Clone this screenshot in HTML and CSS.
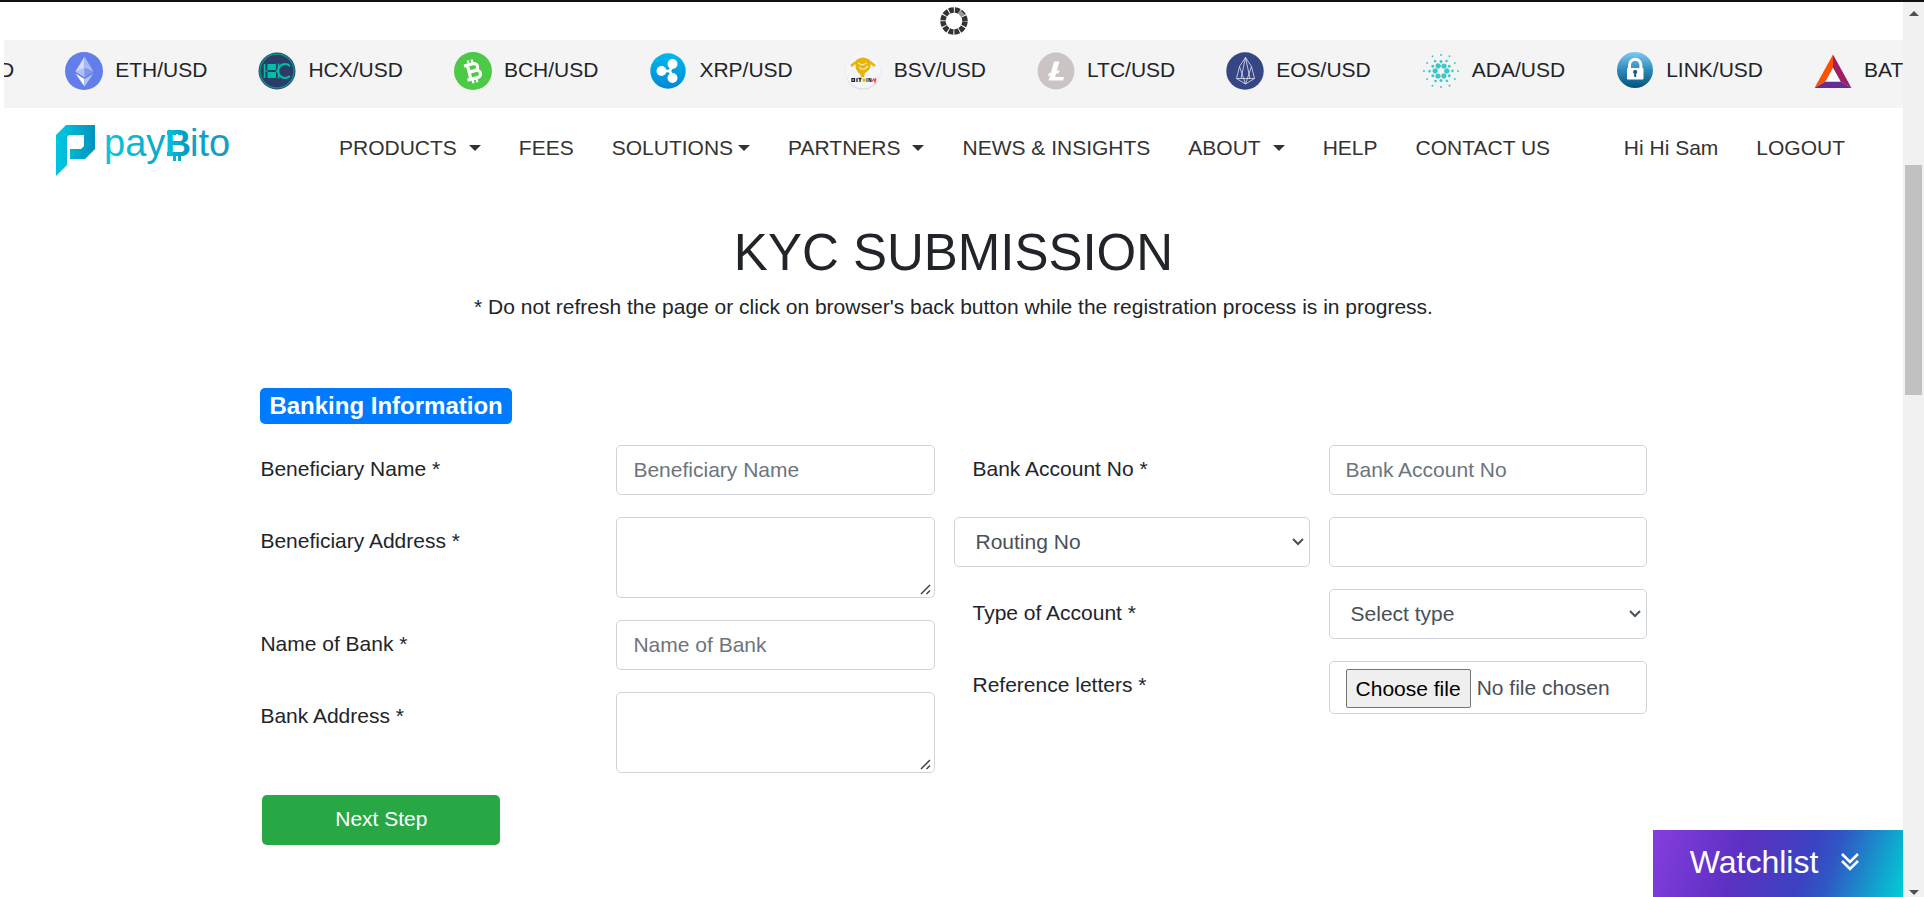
FILE: index.html
```html
<!DOCTYPE html>
<html lang="en">
<head>
<meta charset="utf-8">
<title>KYC Submission - PayBito</title>
<link rel="stylesheet" href="styles.css">
</head>
<body>
<div class="page">
  <div class="loader">
    <svg class="loader-icon" viewBox="0 0 28 28" aria-label="Loading">
      <circle cx="14" cy="14" r="11" fill="none" stroke="#333" stroke-width="5.500" stroke-dasharray="4.76 1" stroke-dashoffset="-0.5"/>
      <path d="M18.700 6.600 L20.200 3.800 A11.500 11.500 0 0 1 24 7.600 L21.400 9.300Z" fill="#999" stroke="#999"/>
    </svg>
  </div>

  <div class="ticker">
    <div class="ticker-track">
      <div class="coin">BTC/USD</div>
      <div class="coin">
        <svg class="coin-icon" viewBox="0 0 38 38"><circle cx="19" cy="19" r="19" fill="#627eea"/><path d="M19.5 4.500L10.500 19.500 19.500 25z" fill="#d5dcfa"/><path d="M19.500 4.500L28.500 19.500 19.500 25z" fill="#aab9f4"/><path d="M10.500 19.500L19.500 15.500V25z" fill="#b3c0f5"/><path d="M28.500 19.500L19.500 15.500V25z" fill="#7f96ee"/><path d="M10.500 21.500L19.500 27V34.500z" fill="#fff"/><path d="M28.500 21.500L19.500 27V34.500z" fill="#b5c2f6"/></svg>
        ETH/USD</div>
      <div class="coin">
        <svg class="coin-icon" viewBox="0 0 38 38"><circle cx="19" cy="19" r="18.500" fill="#2b3d67"/><circle cx="19" cy="19" r="17" fill="none" stroke="#0d8f85" stroke-width="1.500"/><path d="M6.500 12v14" stroke="#00bfa5" stroke-width="1.500"/><path d="M6 19h4" stroke="#00bfa5"/><path d="M9.500 12H18v6H9.500zM9.500 20H18v6H9.500z" fill="#00bfa5"/><path d="M20.500 11.500v15M18 19h3" stroke="#00bfa5" stroke-width="1.400"/><path d="M32 14a7 7 0 1 0 0 10" fill="none" stroke="#00bfa5" stroke-width="2"/></svg>
        HCX/USD</div>
      <div class="coin">
        <svg class="coin-icon" viewBox="0 0 38 38"><circle cx="19" cy="19" r="19" fill="#4cca47"/><g transform="rotate(-14 19 19)" fill="none" stroke="#fff"><path d="M11.500 12H21a3.500 3.500 0 0 1 0 7h-6M11.500 26.500H22a3.700 3.700 0 0 0 0-7.400h-6M15 12v14" stroke-width="3.200"/><path d="M16.500 7.500v5M20.500 7.500v5M16.500 26v5M20.500 26v5" stroke-width="2.200"/></g></svg>
        BCH/USD</div>
      <div class="coin">
        <svg class="coin-icon" viewBox="0 0 38 38"><defs><linearGradient id="xrp" x2="0" y2="1"><stop stop-color="#00b9ee"/><stop offset="1" stop-color="#0089d6"/></linearGradient></defs><circle cx="19" cy="19" r="17.700" fill="url(#xrp)"/><g fill="#fff"><circle cx="12.500" cy="19" r="5"/><circle cx="23.500" cy="12" r="5"/><circle cx="23.500" cy="26" r="5"/></g><path d="M12 19h7q3 0 3.500-4M19 19q3 0 3.500 4" fill="none" stroke="#fff" stroke-width="2.600"/></svg>
        XRP/USD</div>
      <div class="coin">
        <svg class="coin-icon" viewBox="0 0 38 38"><circle cx="19" cy="20" r="17.500" fill="#d3d5da"/><circle cx="19" cy="19" r="17.500" fill="#f4f6fc"/><path d="M12 8q7-5 14 0q3 9-5 13l-1 4q-3 1-4-3q-6-4-4-14z" fill="#eab308"/><path d="M14 11l4 2 5-2M15 15q4 5 9-1M17 17h4" fill="none" stroke="#f8eec5" stroke-width="1.200"/><path d="M12 10L7 14M26 10l5 4" stroke="#eab308" stroke-width="2.500"/><path d="M8 26v4M8 26.700h2.500v2.600H8M13 26v4M14.500 26.500h3M16 26v4" fill="none" stroke="#222" stroke-width="1.300"/><circle cx="20" cy="28" r="1.800" fill="#eab308"/><path d="M23 26v4M25 30v-4l2 4v-4" fill="none" stroke="#222"/><path d="M28 29.500l2-3M30 27l1 3 1-4" fill="none" stroke="#e0455a" stroke-width="1.200"/></svg>
        BSV/USD</div>
      <div class="coin">
        <svg class="coin-icon" viewBox="0 0 38 38"><circle cx="19" cy="19" r="18.500" fill="#cac5c4"/><path d="M17 9.500h5.500L19.800 19l2.700-1-.7 2.800-2.800 1.100-.9 3.100H27L26 28.500H11.500l1.700-5.100-2.200.8.700-2.800 2.300-.9z" fill="#fff"/></svg>
        LTC/USD</div>
      <div class="coin">
        <svg class="coin-icon" viewBox="0 0 38 38"><circle cx="19" cy="19" r="18.700" fill="#364583"/><path d="M19.500 5.500l-6 9-3 12 9 5.500 9-5.500-3-12zM13.500 14.500l6 17.500 6-17.500M19.500 5.500l-4.500 21M19.500 5.500l4.500 21M10.500 26.500h18" fill="none" stroke="#dfe4f5" stroke-width=".8"/></svg>
        EOS/USD</div>
      <div class="coin">
        <svg class="coin-icon" viewBox="-19 -19 38 38"><defs><g id="ada"><circle cy="-9.500" r="1.500"/><circle cx="3" cy="-5" r="2.600"/><circle cx="5.500" cy="-10" r="1.300"/><circle cy="-16" r="1"/><circle cx="8.500" cy="-14.700" r="1"/></g></defs><g fill="#3cc8c8"><use href="#ada"/><use href="#ada" transform="rotate(60)"/><use href="#ada" transform="rotate(120)"/><use href="#ada" transform="rotate(180)"/><use href="#ada" transform="rotate(240)"/><use href="#ada" transform="rotate(300)"/></g></svg>
        ADA/USD</div>
      <div class="coin">
        <svg class="coin-icon" viewBox="0 0 38 38"><defs><linearGradient id="lnk" x2="0" y2="1"><stop stop-color="#7ccaf2"/><stop offset=".5" stop-color="#2e89b8"/><stop offset="1" stop-color="#04527c"/></linearGradient></defs><circle cx="19" cy="18" r="18" fill="url(#lnk)"/><path d="M13.500 17v-4a5.700 5.700 0 0 1 11.400 0v4" fill="none" stroke="#fff" stroke-width="3"/><rect x="11" y="16" width="16.500" height="11.500" rx="1" fill="#fff"/><path d="M19.200 18a2 2 0 0 1 1 3.800V25h-2v-3.200a2 2 0 0 1 1-3.800z" fill="#12628f"/></svg>
        LINK/USD</div>
      <div class="coin">
        <svg class="coin-icon" viewBox="0 0 38 38"><path d="M19 2.500L.5 36 11.500 29.500 19 16z" fill="#ff5000"/><path d="M19 2.500L37.500 36 26.500 29.500 19 16z" fill="#9e1f63"/><path d="M.5 36h37l-11-6.500h-15z" fill="#662d91"/><path d="M19 16l-7.500 13.500h15z" fill="#fff"/></svg>
        BAT/USD</div>
    </div>
  </div>

  <header class="header">
    <a class="logo" href="#" aria-label="paybito">
      <svg class="logo-art" viewBox="0 0 176 54">
        <defs>
          <linearGradient id="mark" x2="1" y2="0"><stop offset=".15" stop-color="#00c3de"/><stop offset="1" stop-color="#0292bd"/></linearGradient>
          <linearGradient id="word" gradientUnits="userSpaceOnUse" x1="50" y1="0" x2="175" y2="0"><stop stop-color="#0cc4de"/><stop offset=".5" stop-color="#0ba5c9"/><stop offset="1" stop-color="#149bc4"/></linearGradient>
          <linearGradient id="coinb" gradientUnits="userSpaceOnUse" x1="112" y1="0" x2="136" y2="0"><stop stop-color="#00c3de"/><stop offset="1" stop-color="#0292bd"/></linearGradient>
        </defs>
        <path d="M1 11L11 1h29v24L30 35H15V25h11l3-3V11H14l-2 2v28L1 52z" fill="url(#mark)"/>
        <g class="logo-word" fill="url(#word)"><text x="49" y="32">pay</text><text x="135" y="32">ito</text></g>
        <g fill="url(#coinb)"><text class="logo-b" x="110" y="32">B</text><path d="M118 6h3v5h-3zM123 6h3v5h-3zM118 31h3v6h-3zM123 31h3v6h-3zM112 7h5v4h-5zM112 28h5v4h-5z"/></g>
      </svg>
    </a>
    <nav class="nav">
      <a href="#" class="spaced">PRODUCTS <span class="caret"></span></a>
      <a href="#">FEES</a>
      <a href="#" class="tight">SOLUTIONS<span class="caret"></span></a>
      <a href="#" class="spaced">PARTNERS <span class="caret"></span></a>
      <a href="#">NEWS &amp; INSIGHTS</a>
      <a href="#" class="spaced">ABOUT <span class="caret"></span></a>
      <a href="#">HELP</a>
      <a href="#">CONTACT US</a>
    </nav>
    <nav class="nav account">
      <a href="#">Hi Hi Sam</a>
      <a href="#">LOGOUT</a>
    </nav>
  </header>

  <main class="main">
    <h1 class="title">KYC SUBMISSION</h1>
    <p class="note">* Do not refresh the page or click on browser's back button while the registration process is in progress.</p>

    <form class="form">
      <h2 class="badge">Banking Information</h2>
      <div class="columns">
        <div class="stack">
          <div class="row"><label for="bname">Beneficiary Name *</label><input class="control" id="bname" type="text" placeholder="Beneficiary Name"></div>
          <div class="row"><label for="baddr">Beneficiary Address *</label><textarea class="control" id="baddr"></textarea></div>
          <div class="row"><label for="bank">Name of Bank *</label><input class="control" id="bank" type="text" placeholder="Name of Bank"></div>
          <div class="row"><label for="bankaddr">Bank Address *</label><textarea class="control" id="bankaddr"></textarea></div>
        </div>
        <div class="stack">
          <div class="row"><label for="acct">Bank Account No *</label><input class="control" id="acct" type="text" placeholder="Bank Account No"></div>
          <div class="row"><select class="control wide" aria-label="Code type"><option>Routing No</option></select><input class="control" type="text" aria-label="Routing No"></div>
          <div class="row"><label for="type">Type of Account *</label><select class="control" id="type"><option>Select type</option></select></div>
          <div class="row"><label for="letters">Reference letters *</label>
            <div class="control file"><input class="file-input" id="letters" type="file"><label class="file-button" for="letters">Choose file</label><span>No file chosen</span></div>
          </div>
        </div>
      </div>
      <button class="next" type="button">Next Step</button>
    </form>
  </main>
</div>

<div class="scrollbar" aria-hidden="true">
  <svg class="arrow" viewBox="0 0 10 5"><path d="M0 5L5 0l5 5z" fill="#505050"/></svg>
  <div class="track"><div class="thumb"></div></div>
  <svg class="arrow" viewBox="0 0 10 5"><path d="M0 0l5 5 5-5z" fill="#505050"/></svg>
</div>

<button class="watchlist" type="button">Watchlist
  <svg class="chevrons" viewBox="0 0 20 20"><path d="M2 2l8 8 8-8M2 9l8 8 8-8" fill="none" stroke="#fff" stroke-width="2.600"/></svg>
</button>
</body>
</html>
```
FILE: styles.css
```css
* { box-sizing: border-box; }

body {
  margin: 0;
  min-height: 100vh;
  display: grid;
  grid-template-columns: minmax(0, 1fr) 21px;
  border-top: 2px solid #111;
  background: #fff;
  color: #212529;
  font-family: "Liberation Sans", Arial, sans-serif;
  font-size: 21px;
  line-height: 32px;
}

button, input, select, textarea { font: inherit; }
a { color: inherit; text-decoration: none; }

.page { padding-left: 4px; }

.loader {
  display: flex;
  align-items: center;
  justify-content: center;
  height: 38px;
}
.loader-icon { width: 28px; height: 28px; }

.ticker {
  height: 68px;
  overflow: hidden;
  background: #f4f4f4;
}
.ticker-track {
  display: flex;
  gap: 51px;
  margin-left: -82px;
  padding-top: 12px;
  width: max-content;
}
.coin {
  display: flex;
  align-items: flex-start;
  gap: 12px;
  line-height: 36px;
}
.coin-icon { width: 38px; height: 38px; }

.header {
  display: flex;
  align-items: center;
  height: 80px;
  padding: 0 58px 0 51px;
  color: #333;
}
.logo { display: flex; padding-top: 6px; }
.logo-art { width: 176px; height: 54px; }
.logo-word { font-size: 38px; }
.logo-b { font-size: 36px; font-weight: bold; }

.nav {
  display: flex;
  gap: 38px;
  margin-left: 108px;
  white-space: nowrap;
}
.nav.account { margin-left: auto; }
.nav a { display: flex; align-items: center; }
.nav .spaced { gap: 12px; }
.nav .tight { gap: 5px; }
.caret {
  border: 6px solid transparent;
  border-top-color: #333;
  border-bottom: 0;
}

.main { padding-bottom: 40px; }
.title {
  margin: 34px 0 0;
  font-size: 51px;
  font-weight: normal;
  line-height: 62px;
  text-align: center;
}
.note { margin: 7px 0 0; text-align: center; }

.form {
  width: 75%;
  margin: 65px auto 0;
}
.badge {
  display: inline-block;
  margin: 0 19px 21px;
  padding: 0 9px;
  border-radius: 5px;
  background: #007bff;
  color: #fff;
  font-size: 24px;
  line-height: 36px;
}
.columns {
  display: grid;
  grid-template-columns: 1fr 1fr;
}
.stack {
  display: flex;
  flex-direction: column;
  gap: 22px;
}
.row {
  display: grid;
  grid-template-columns: 1fr 1fr;
  align-items: start;
}
.row > label { padding: 8px 19px 0; }
.row > .control { margin: 0 19px; }
.row > .wide { margin: 0; }

.control {
  min-width: 0;
  height: 50px;
  padding: 8px 16px;
  border: 1px solid #ced4da;
  border-radius: 5px;
  background-color: #fff;
  color: #495057;
}
.control::placeholder { color: #6c757d; opacity: 1; }
textarea.control {
  display: block;
  height: 81px;
  resize: vertical;
}
textarea.control::-webkit-resizer {
  background: url("data:image/svg+xml,%3Csvg xmlns='http://www.w3.org/2000/svg' width='15' height='15'%3E%3Cpath d='M2 12L11 3M7.500 12L11 8.500' stroke='%23444' stroke-width='1.500'/%3E%3C/svg%3E") no-repeat right bottom;
}
select.control {
  appearance: none;
  padding-left: 21px;
  background-image: url("data:image/svg+xml,%3Csvg xmlns='http://www.w3.org/2000/svg' width='12' height='8'%3E%3Cpath d='M1 1l5 5 5-5' fill='none' stroke='%23495057' stroke-width='2'/%3E%3C/svg%3E");
  background-repeat: no-repeat;
  background-position: right 5px center;
}
.file {
  position: relative;
  display: flex;
  gap: 6px;
  height: 53px;
  padding-top: 7px;
  line-height: 37px;
  white-space: nowrap;
}
.file-input {
  position: absolute;
  width: 1px;
  height: 1px;
  opacity: 0;
}
.file-button {
  height: 39px;
  padding: 0 9px;
  border: 1px solid #767676;
  border-radius: 2px;
  background: #efefef;
  color: #000;
}

.next {
  display: block;
  width: 238px;
  height: 50px;
  margin: 22px 21px 0;
  padding: 0 0 2px;
  border: 0;
  border-radius: 5px;
  background: #28a745;
  color: #fff;
}

.scrollbar {
  display: flex;
  flex-direction: column;
  align-items: center;
  padding: 9px 2px 2px;
  background: #f1f1f1;
}
.arrow { width: 10px; height: 5px; }
.track { flex: 1; width: 100%; }
.thumb {
  height: 230px;
  margin-top: 149px;
  background: #c1c1c1;
}

.watchlist {
  position: fixed;
  right: 21px;
  bottom: 0;
  display: flex;
  align-items: center;
  justify-content: center;
  gap: 22px;
  width: 250px;
  height: 67px;
  padding: 0 6px 4px 0;
  border: 0;
  background: linear-gradient(110deg, #863edf 0%, #5c30c2 35%, #3b42c2 60%, #2f57c4 70%, #00cfd5 100%);
  color: #fff;
  font-size: 32px;
}
.chevrons { width: 20px; height: 20px; }
```
